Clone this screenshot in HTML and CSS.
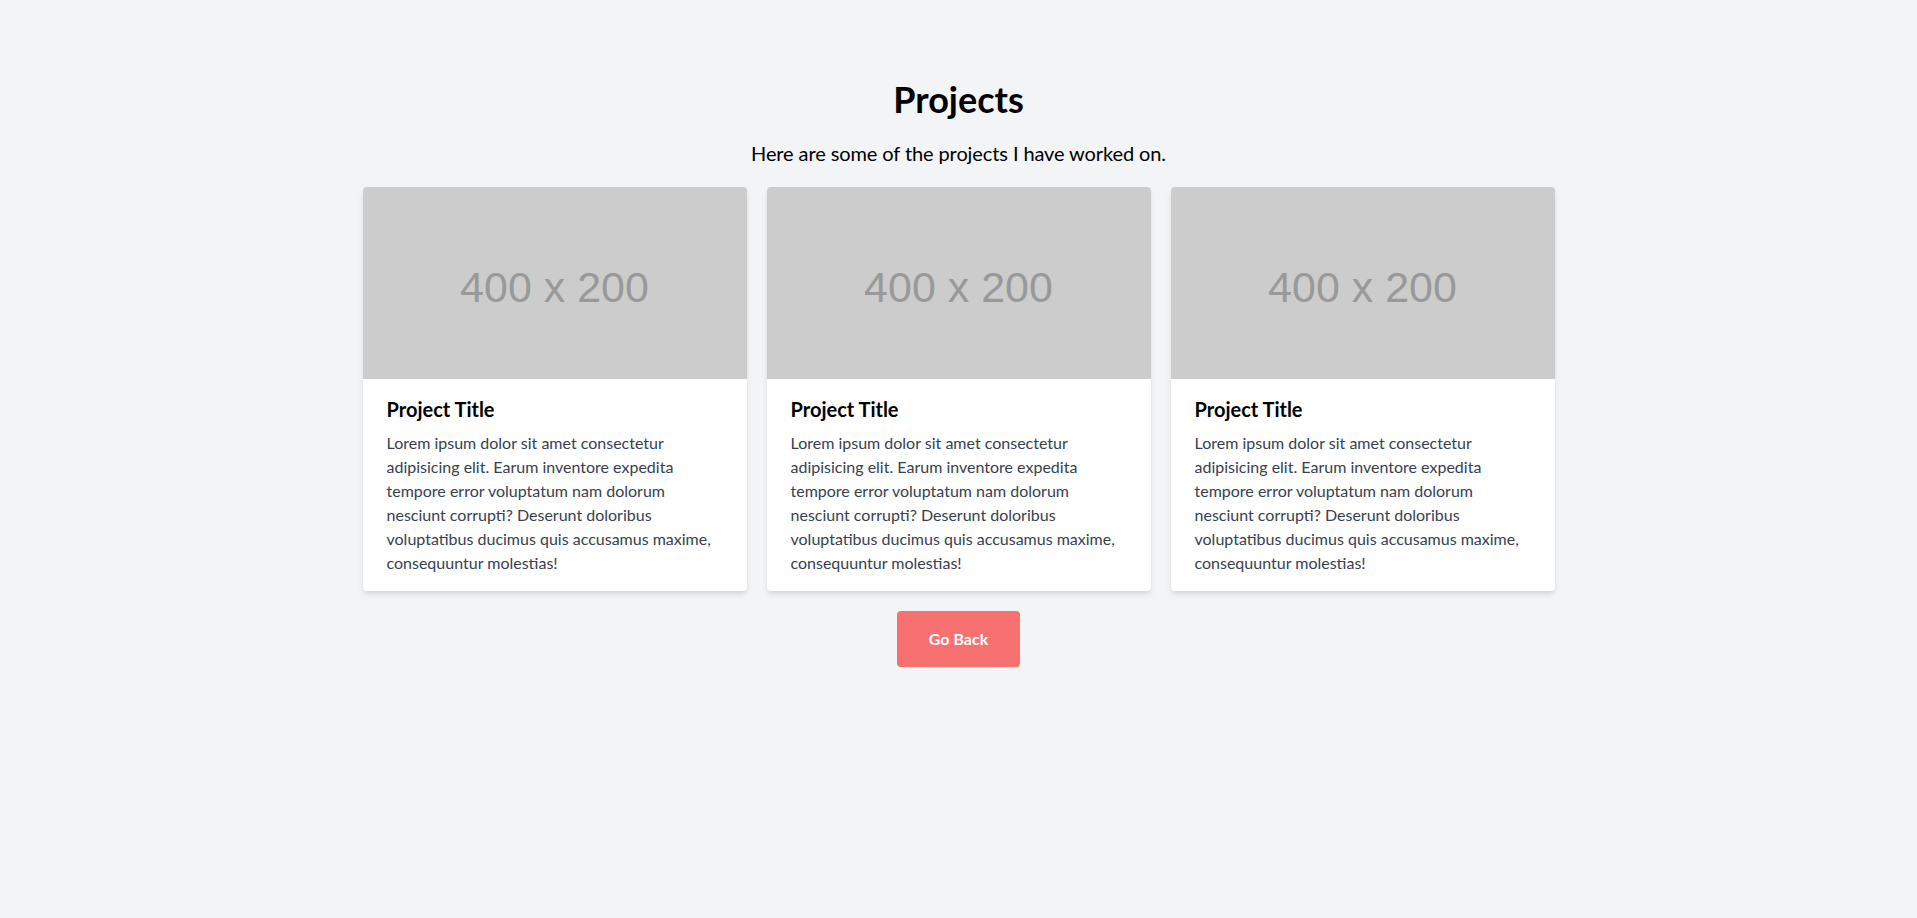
FILE: index.html
```html
<!DOCTYPE html>
<html lang="en">
<head>
<meta charset="utf-8">
<title>Projects</title>
<link rel="stylesheet" href="styles.css">
</head>
<body>
<main class="page">
  <h1 class="title">Projects</h1>
  <p class="subtitle">Here are some of the projects I have worked on.</p>
  <section class="grid">
    <article class="card">
      <div class="thumb"><span>400 x 200</span></div>
      <div class="card-body">
        <h2 class="card-title">Project Title</h2>
        <p class="card-text">Lorem ipsum dolor sit amet consectetur adipisicing elit. Earum inventore expedita tempore error voluptatum nam dolorum nesciunt corrupti? Deserunt doloribus voluptatibus ducimus quis accusamus maxime, consequuntur molestias!</p>
      </div>
    </article>
    <article class="card">
      <div class="thumb"><span>400 x 200</span></div>
      <div class="card-body">
        <h2 class="card-title">Project Title</h2>
        <p class="card-text">Lorem ipsum dolor sit amet consectetur adipisicing elit. Earum inventore expedita tempore error voluptatum nam dolorum nesciunt corrupti? Deserunt doloribus voluptatibus ducimus quis accusamus maxime, consequuntur molestias!</p>
      </div>
    </article>
    <article class="card">
      <div class="thumb"><span>400 x 200</span></div>
      <div class="card-body">
        <h2 class="card-title">Project Title</h2>
        <p class="card-text">Lorem ipsum dolor sit amet consectetur adipisicing elit. Earum inventore expedita tempore error voluptatum nam dolorum nesciunt corrupti? Deserunt doloribus voluptatibus ducimus quis accusamus maxime, consequuntur molestias!</p>
      </div>
    </article>
  </section>
  <a class="btn" href="#">Go Back</a>
</main>
</body>
</html>
```
FILE: styles.css
```css
* { box-sizing: border-box; }
html, body {
  margin: 0;
  padding: 0;
  background: #f3f4f6;
  font-family: Lato, "Open Sans", sans-serif;
  color: #111827;
}
.page {
  display: flex;
  flex-direction: column;
  align-items: center;
  padding-top: 79px;
}
.title {
  margin: 0;
  font-size: 36px;
  line-height: 40px;
  font-weight: 700;
  color: #000;
}
.subtitle {
  margin: 20px 0 0;
  font-size: 20px;
  line-height: 28px;
  letter-spacing: -0.1px;
  color: #000;
}
.grid {
  display: grid;
  grid-template-columns: repeat(3, 384px);
  gap: 20px;
  margin-top: 20px;
}
.card {
  background: #fff;
  border-radius: 4px;
  overflow: hidden;
  box-shadow: 0 4px 6px -1px rgba(0,0,0,0.1), 0 2px 4px -1px rgba(0,0,0,0.06);
}
.thumb {
  height: 192px;
  background: #cccccc;
  display: flex;
  align-items: center;
  justify-content: center;
}
.thumb span {
  font-family: "Liberation Sans", Arial, sans-serif;
  font-size: 43px;
  line-height: 1;
  color: #999999;
  padding-top: 8px;
}
.card-body {
  padding: 16px 24px 16px;
}
.card-title {
  margin: 0 0 8px;
  font-size: 20px;
  line-height: 28px;
  font-weight: 700;
  color: #000;
}
.card-text {
  margin: 0;
  font-size: 16px;
  line-height: 24px;
  color: #374151;
}
.btn {
  margin-top: 20px;
  display: inline-block;
  background: #f87171;
  color: #fff;
  font-weight: 700;
  font-size: 16px;
  line-height: 24px;
  padding: 16px 32px;
  border-radius: 4px;
  text-decoration: none;
}
```
